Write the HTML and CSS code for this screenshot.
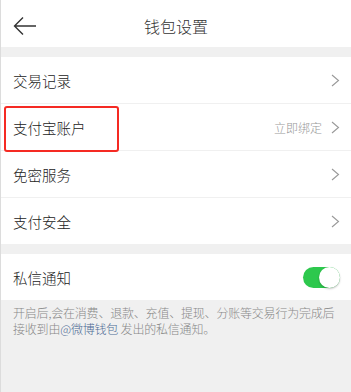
FILE: index.html
```html
<!DOCTYPE html>
<html lang="zh-CN">
<head>
<meta charset="utf-8">
<link rel="stylesheet" href="styles.css">
</head>
<body>
<div class="page">
  <header class="header">
    <svg class="back" width="24" height="20" viewBox="0 0 24 20"><path d="M23 10H1.5M10 1.5L1.5 10L10 18.5" fill="none" stroke="#333" stroke-width="1.4"/></svg>
    <div class="title">钱包设置</div>
  </header>
  <div class="gap"></div>
  <section class="group">
    <div class="row"><span class="label">交易记录</span><span class="right"><svg class="chev" width="9" height="13" viewBox="0 0 9 13"><path d="M1 1L7.5 6.5L1 12" fill="none" stroke="#999" stroke-width="1.1"/></svg></span></div>
    <div class="row"><span class="label">支付宝账户</span><span class="right"><span class="hint">立即绑定</span><svg class="chev" width="9" height="13" viewBox="0 0 9 13"><path d="M1 1L7.5 6.5L1 12" fill="none" stroke="#999" stroke-width="1.1"/></svg></span></div>
    <div class="row"><span class="label">免密服务</span><span class="right"><svg class="chev" width="9" height="13" viewBox="0 0 9 13"><path d="M1 1L7.5 6.5L1 12" fill="none" stroke="#999" stroke-width="1.1"/></svg></span></div>
    <div class="row"><span class="label">支付安全</span><span class="right"><svg class="chev" width="9" height="13" viewBox="0 0 9 13"><path d="M1 1L7.5 6.5L1 12" fill="none" stroke="#999" stroke-width="1.1"/></svg></span></div>
  </section>
  <div class="gap"></div>
  <section class="group">
    <div class="row"><span class="label">私信通知</span><span class="toggle"><span class="knob"></span></span></div>
  </section>
  <p class="desc">开启后,会在消费、退款、充值、提现、分账等交易行为完成后<br>接收到由<span class="link">@微博钱包</span> 发出的私信通知。</p>
  <div class="highlight"></div>
</div>
</body>
</html>
```
FILE: styles.css
```css
html, body {
  margin: 0;
  padding: 0;
  background: #f0f0f0;
}
body {
  font-family: "Noto Sans CJK SC", "Noto Sans", sans-serif;
  color: #333;
}
.page {
  position: relative;
  width: 350px;
  height: 392px;
  border-left: 1px solid #dcdcdc;
  background: #f0f0f0;
  overflow: hidden;
}
.header {
  position: relative;
  height: 47px;
  background: #fff;
  display: flex;
  align-items: center;
  justify-content: center;
}
.back {
  position: absolute;
  left: 12px;
  top: 16px;
}
.title {
  font-size: 16px;
  font-weight: 300;
  color: #333;
  padding-top: 4px;
}
.gap {
  height: 10px;
}
.group {
  background: #fff;
}
.row {
  height: 46px;
  display: flex;
  align-items: center;
  justify-content: space-between;
  padding: 0 11px 0 12px;
  border-bottom: 1px solid #f0f0f0;
}
.row:last-child {
  border-bottom: none;
}
.label {
  font-size: 14.5px;
  font-weight: 300;
  color: #222;
}
.right {
  display: flex;
  align-items: center;
  gap: 9px;
}
.hint {
  font-size: 12px;
  font-weight: 300;
  color: #999;
}
.chev {
  display: block;
}
.toggle {
  position: relative;
  width: 37px;
  height: 21px;
  border-radius: 11px;
  background: #2dc84d;
}
.knob {
  position: absolute;
  right: 0;
  top: 0;
  width: 21px;
  height: 21px;
  border-radius: 50%;
  background: #fff;
  box-shadow: 0 1px 2px rgba(0,0,0,0.25);
}
.desc {
  margin: 0;
  padding: 5px 12px 0 12px;
  font-size: 12px;
  font-weight: 300;
  line-height: 16px;
  color: #888;
  white-space: nowrap;
  letter-spacing: -0.2px;
}
.link {
  color: #4d6b94;
}
.highlight {
  position: absolute;
  left: 3px;
  top: 106px;
  width: 111px;
  height: 42px;
  border: 2px solid #f52a23;
  border-radius: 3px;
}
```
